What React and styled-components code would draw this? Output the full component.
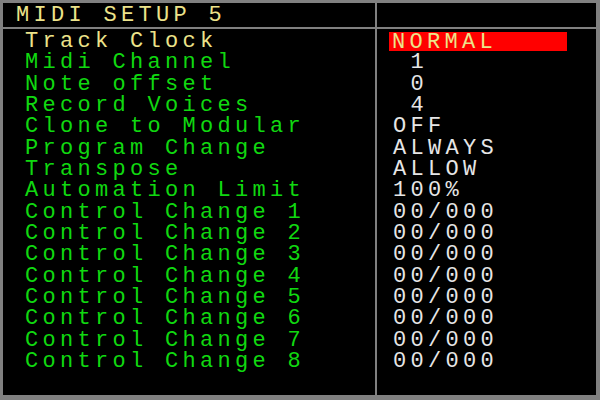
import React from 'react';
import styled, { createGlobalStyle } from 'styled-components';

const GlobalStyle = createGlobalStyle`
  html, body {
    margin: 0;
    padding: 0;
    background: #808080;
  }
`;

const Screen = styled.div`
  width: 600px;
  height: 400px;
  box-sizing: border-box;
  padding: 3px 4px 5px 3px;
  background: #808080;
  font-family: "Liberation Mono", "DejaVu Sans Mono", monospace;
  font-size: 22px;
  letter-spacing: 4.3px;
`;

const Panel = styled.div`
  height: 100%;
  display: grid;
  grid-template-columns: 372px 1fr;
  grid-template-rows: 24px 1fr;
  gap: 2px;
`;

const Cell = styled.div`
  background: #000;
  min-height: 0;
`;

const Title = styled(Cell)`
  color: #ece38a;
  line-height: 26px;
  padding-left: 13px;
  white-space: pre;
`;

const Column = styled(Cell)`
  padding: ${p => (p.$values ? '2px 0 0 12px' : '2px 0 0 22px')};
  box-sizing: border-box;
  overflow: hidden;
`;

const Row = styled.div`
  height: 21.33px;
  line-height: 21.33px;
  white-space: pre;
  color: ${p => (p.$selected ? '#ece38a' : p.$values ? '#e6e6e6' : '#10d810')};
`;

const Highlight = styled.span`
  display: inline-block;
  width: 178px;
  height: 19px;
  line-height: 21px;
  box-sizing: border-box;
  padding-left: 3px;
  background: #ff0000;
  color: #ece38a;
  vertical-align: top;
  margin-top: 1px;
`;

const Plain = styled.span`
  padding-left: 4px;
`;

const params = [
  ['Track Clock', 'NORMAL'],
  ['Midi Channel', ' 1'],
  ['Note offset', ' 0'],
  ['Record Voices', ' 4'],
  ['Clone to Modular', 'OFF'],
  ['Program Change', 'ALWAYS'],
  ['Transpose', 'ALLOW'],
  ['Automation Limit', '100%'],
  ...[1, 2, 3, 4, 5, 6, 7, 8].map(n => [`Control Change ${n}`, '00/000']),
];

const selected = 0;

export default function App() {
  return (
    <>
      <GlobalStyle />
      <Screen>
        <Panel>
          <Title>MIDI SETUP 5</Title>
          <Cell />
          <Column>
            {params.map(([label], i) => (
              <Row key={label} $selected={i === selected}>{label}</Row>
            ))}
          </Column>
          <Column $values>
            {params.map(([label, value], i) => (
              <Row key={label} $values>
                {i === selected ? <Highlight>{value}</Highlight> : <Plain>{value}</Plain>}
              </Row>
            ))}
          </Column>
        </Panel>
      </Screen>
    </>
  );
}
